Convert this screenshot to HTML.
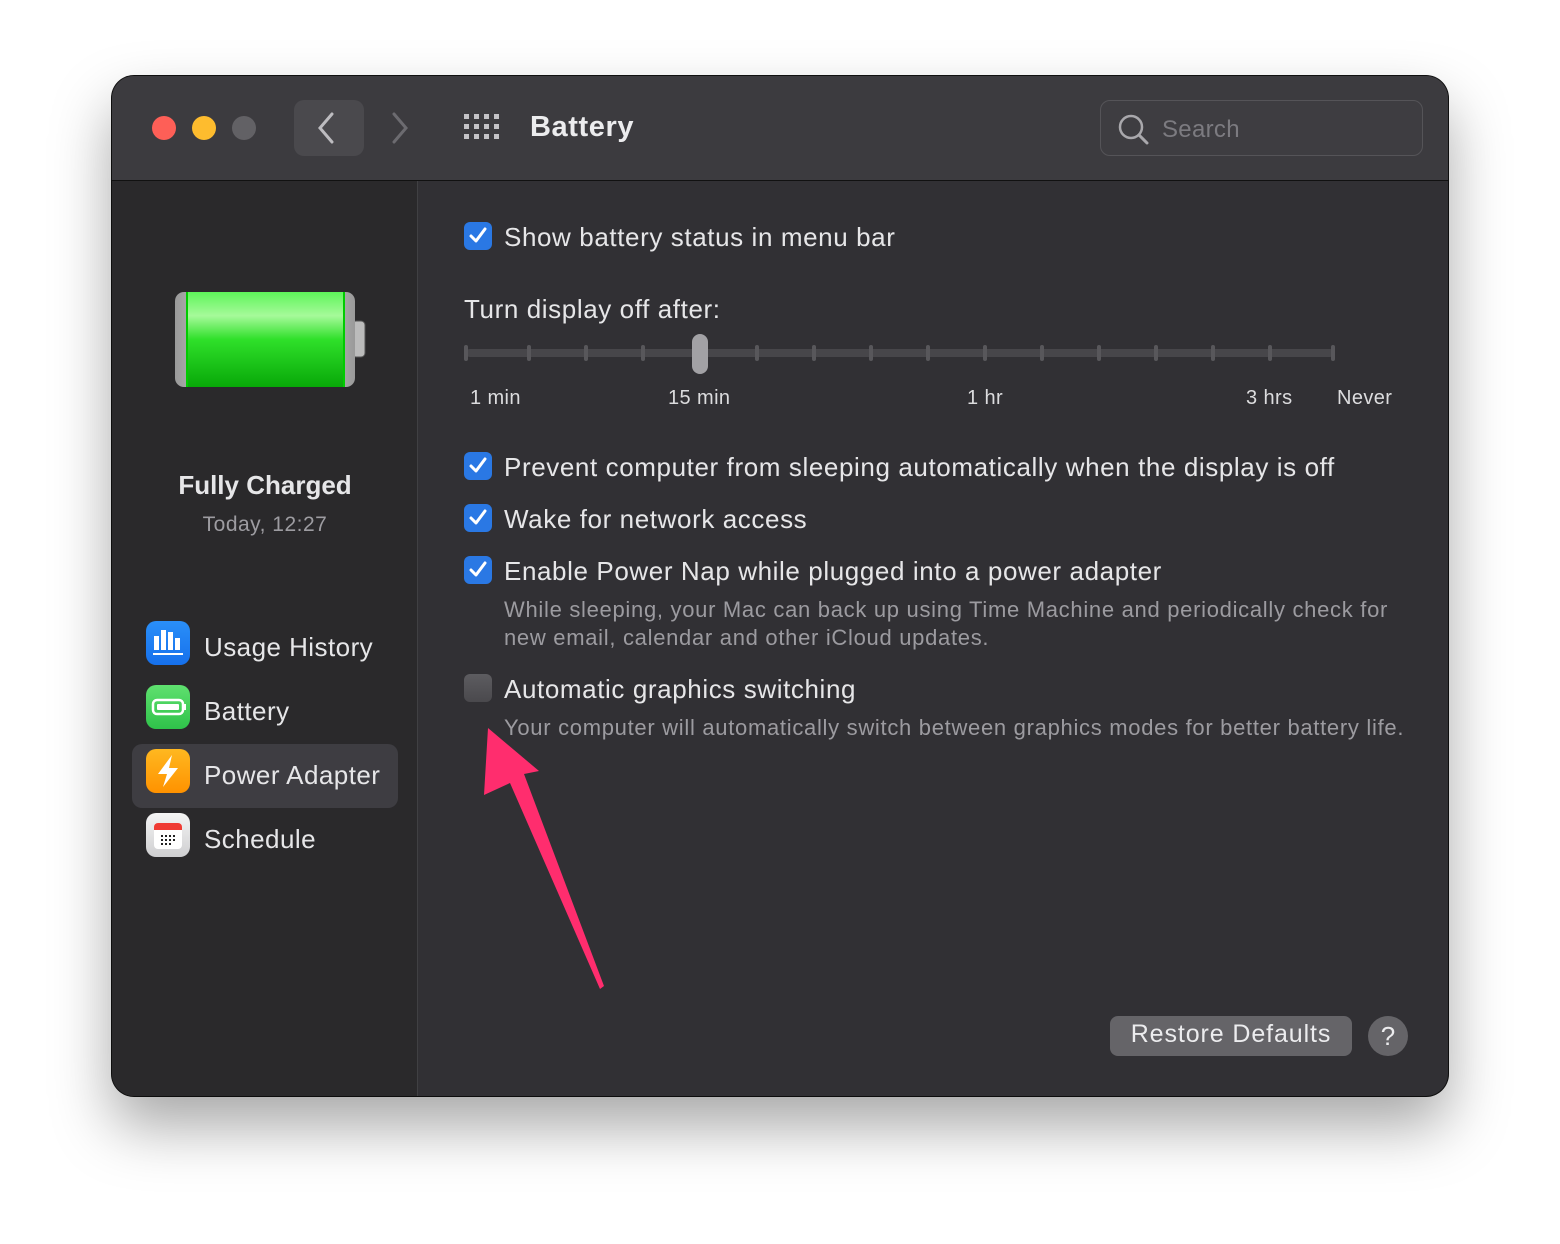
<!DOCTYPE html>
<html><head><meta charset="utf-8"><style>
*{margin:0;padding:0;box-sizing:border-box}
body{width:1560px;height:1244px;background:#fff;position:relative;overflow:hidden;font-family:"Liberation Sans",sans-serif;color:#e4e4e6}
.win{position:absolute;left:112px;top:76px;width:1336px;height:1020px;border-radius:22px;background:#313034;overflow:hidden;box-shadow:0 30px 60px rgba(0,0,0,.35),0 0 0 1px #111;}
.title{position:absolute;left:0;top:0;width:1336px;height:105px;background:#3c3b3f;border-bottom:1px solid #111}
.side{position:absolute;left:0;top:105px;width:306px;height:915px;background:#2a292b;border-right:1px solid #404043}
.a{position:absolute;white-space:nowrap}
.dot{position:absolute;width:24px;height:24px;border-radius:50%;top:40px}
.cb{position:absolute;left:352px;width:28px;height:28px;border-radius:6px;background:#2a78e4}
.cb svg{position:absolute;left:4px;top:4px}
.t{font-size:26px;letter-spacing:0.6px;color:#e6e6e8}
.s{font-size:22px;letter-spacing:0.7px;color:#9c9ba0}
.l{font-size:20px;letter-spacing:0.4px;color:#dcdcde;top:311px}
.tick{position:absolute;top:269px;width:4px;height:16px;border-radius:2px;background:#58575b}
.ic{position:absolute;left:34px;width:44px;height:44px;border-radius:10px}
</style></head><body>
<div class="win">
 <div class="title">
  <div class="dot" style="left:40px;background:#fe5f57"></div>
  <div class="dot" style="left:80px;background:#febc2e"></div>
  <div class="dot" style="left:120px;background:#626165"></div>
  <div class="a" style="left:182px;top:24px;width:70px;height:56px;border-radius:10px;background:#4a494d"></div>
  <svg class="a" style="left:200px;top:34px" width="30" height="36"><path d="M20 4 L8 18 L20 32" stroke="#bdbcc0" stroke-width="3" fill="none" stroke-linecap="round"/></svg>
  <svg class="a" style="left:274px;top:34px" width="30" height="36"><path d="M8 4 L20 18 L8 32" stroke="#6c6b70" stroke-width="3" fill="none" stroke-linecap="round"/></svg>
  <svg class="a" style="left:352px;top:38px" width="38" height="28" fill="#c4c3c7">
   <rect x="0" y="0" width="5" height="5"/><rect x="10" y="0" width="5" height="5"/><rect x="20" y="0" width="5" height="5"/><rect x="30" y="0" width="5" height="5"/>
   <rect x="0" y="10" width="5" height="5"/><rect x="10" y="10" width="5" height="5"/><rect x="20" y="10" width="5" height="5"/><rect x="30" y="10" width="5" height="5"/>
   <rect x="0" y="20" width="5" height="5"/><rect x="10" y="20" width="5" height="5"/><rect x="20" y="20" width="5" height="5"/><rect x="30" y="20" width="5" height="5"/>
  </svg>
  <div class="a" style="left:418px;top:35px;font-size:29px;letter-spacing:0.6px;font-weight:bold;color:#ececee">Battery</div>
  <div class="a" style="left:988px;top:24px;width:323px;height:56px;border-radius:10px;border:1px solid #555458;background:#3e3d41"></div>
  <svg class="a" style="left:1004px;top:36px" width="36" height="36"><circle cx="15" cy="15" r="11" stroke="#a9a8ac" stroke-width="2.5" fill="none"/><path d="M23 23 L31 31" stroke="#a9a8ac" stroke-width="3" stroke-linecap="round"/></svg>
  <div class="a" style="left:1050px;top:40px;font-size:24px;letter-spacing:0.3px;color:#7c7b80">Search</div>
 </div>
 <div class="side">
  <svg class="a" style="left:62px;top:110px" width="192" height="100">
   <defs><linearGradient id="g" x1="0" y1="0" x2="0" y2="1"><stop offset="0" stop-color="#5ef55a"/><stop offset=".25" stop-color="#a6fa9a"/><stop offset=".5" stop-color="#2fe02a"/><stop offset="1" stop-color="#08a808"/></linearGradient>
   <linearGradient id="m" x1="0" y1="0" x2="1" y2="0"><stop offset="0" stop-color="#999"/><stop offset=".5" stop-color="#fff"/><stop offset="1" stop-color="#999"/></linearGradient></defs>
   <rect x="178" y="30" width="13" height="36" rx="4" fill="#bbb" stroke="#555"/>
   <rect x="1" y="1" width="180" height="95" rx="9" fill="url(#m)"/>
   <rect x="12" y="1" width="159" height="95" fill="url(#g)"/>
   <rect x="12" y="1" width="2" height="95" fill="#0c0"/><rect x="169" y="1" width="2" height="95" fill="#0c0"/>
  </svg>
  <div class="a" style="left:0;width:306px;text-align:center;top:289px;font-size:26px;font-weight:bold;color:#e6e6e8">Fully Charged</div>
  <div class="a" style="left:0;width:306px;text-align:center;top:332px;font-size:21px;letter-spacing:0.5px;color:#9d9ca1">Today, 12:27</div>
  <div class="ic" style="top:440px;background:linear-gradient(#2a8ff8,#1670ec)"><svg width="44" height="44" fill="#fff"><rect x="8" y="15" width="5" height="14"/><rect x="15" y="9" width="5" height="20"/><rect x="22" y="11" width="5" height="18"/><rect x="29" y="17" width="5" height="12"/><rect x="7" y="32" width="30" height="2"/></svg></div>
  <div class="a t" style="left:92px;top:451px;letter-spacing:0.45px">Usage History</div>
  <div class="ic" style="top:504px;background:linear-gradient(#5fe06f,#2fc24a)"><svg width="44" height="44"><rect x="7" y="15" width="30" height="14" rx="4" stroke="#fff" stroke-width="2.5" fill="none"/><rect x="11" y="19" width="22" height="6" rx="1" fill="#fff"/><rect x="38" y="19" width="2" height="6" fill="#fff"/></svg></div>
  <div class="a t" style="left:92px;top:515px;letter-spacing:0.45px">Battery</div>
  <div class="a" style="left:20px;top:563px;width:266px;height:64px;border-radius:10px;background:#3e3d42"></div>
  <div class="ic" style="top:568px;background:linear-gradient(#ffb820,#ff9200)"><svg width="44" height="44"><path d="M26 6 L12 25 L21 25 L17 38 L32 19 L23 19 Z" fill="#fff"/></svg></div>
  <div class="a t" style="left:92px;top:579px;letter-spacing:0.45px">Power Adapter</div>
  <div class="ic" style="top:632px;background:linear-gradient(#f4f4f4,#cfcfd1)"><svg width="44" height="44"><rect x="8" y="10" width="28" height="26" rx="4" fill="#fff"/><path d="M8 14 a4 4 0 0 1 4-4 h20 a4 4 0 0 1 4 4 v3 h-28z" fill="#ef3b33"/><g fill="#222"><rect x="15" y="22" width="2" height="2"/><rect x="19" y="22" width="2" height="2"/><rect x="23" y="22" width="2" height="2"/><rect x="27" y="22" width="2" height="2"/><rect x="15" y="26" width="2" height="2"/><rect x="19" y="26" width="2" height="2"/><rect x="23" y="26" width="2" height="2"/><rect x="27" y="26" width="2" height="2"/><rect x="15" y="30" width="2" height="2"/><rect x="19" y="30" width="2" height="2"/><rect x="23" y="30" width="2" height="2"/></g></svg></div>
  <div class="a t" style="left:92px;top:643px;letter-spacing:0.45px">Schedule</div>
 </div>

 <div class="cb" style="top:146px"><svg width="20" height="20"><path d="M3 10 L8 15 L17 3" stroke="#fff" stroke-width="3" fill="none" stroke-linecap="round" stroke-linejoin="round"/></svg></div>
 <div class="a t" style="left:392px;top:146px">Show battery status in menu bar</div>
 <div class="a t" style="left:352px;top:218px">Turn display off after:</div>
 <div class="a" style="left:354px;top:273px;width:868px;height:8px;border-radius:4px;background:#47464a"></div>
 <div class="tick" style="left:352px"></div><div class="tick" style="left:415px"></div><div class="tick" style="left:472px"></div><div class="tick" style="left:529px"></div>
 <div class="tick" style="left:643px"></div><div class="tick" style="left:700px"></div><div class="tick" style="left:757px"></div><div class="tick" style="left:814px"></div><div class="tick" style="left:871px"></div><div class="tick" style="left:928px"></div><div class="tick" style="left:985px"></div><div class="tick" style="left:1042px"></div><div class="tick" style="left:1099px"></div><div class="tick" style="left:1156px"></div><div class="tick" style="left:1219px"></div>
 <div class="a" style="left:580px;top:258px;width:16px;height:40px;border-radius:8px;background:#a2a1a5"></div>
 <div class="a l" style="left:358px">1 min</div>
 <div class="a l" style="left:556px">15 min</div>
 <div class="a l" style="left:855px">1 hr</div>
 <div class="a l" style="left:1134px">3 hrs</div>
 <div class="a l" style="left:1225px">Never</div>

 <div class="cb" style="top:376px"><svg width="20" height="20"><path d="M3 10 L8 15 L17 3" stroke="#fff" stroke-width="3" fill="none" stroke-linecap="round" stroke-linejoin="round"/></svg></div>
 <div class="a t" style="left:392px;top:376px">Prevent computer from sleeping automatically when the display is off</div>
 <div class="cb" style="top:428px"><svg width="20" height="20"><path d="M3 10 L8 15 L17 3" stroke="#fff" stroke-width="3" fill="none" stroke-linecap="round" stroke-linejoin="round"/></svg></div>
 <div class="a t" style="left:392px;top:428px">Wake for network access</div>
 <div class="cb" style="top:480px"><svg width="20" height="20"><path d="M3 10 L8 15 L17 3" stroke="#fff" stroke-width="3" fill="none" stroke-linecap="round" stroke-linejoin="round"/></svg></div>
 <div class="a t" style="left:392px;top:480px">Enable Power Nap while plugged into a power adapter</div>
 <div class="a s" style="left:392px;top:520px;line-height:28px">While sleeping, your Mac can back up using Time Machine and periodically check for<br>new email, calendar and other iCloud updates.</div>
 <div class="cb" style="top:598px;background:linear-gradient(#5d5c60,#4a494d)"></div>
 <div class="a t" style="left:392px;top:598px">Automatic graphics switching</div>
 <div class="a s" style="left:392px;top:639px">Your computer will automatically switch between graphics modes for better battery life.</div>

 <div class="a" style="left:998px;top:940px;width:242px;height:40px;border-radius:8px;background:#656468"></div>
 <div class="a" style="left:998px;top:944px;width:242px;text-align:center;font-size:25px;letter-spacing:0.9px;color:#ececee">Restore Defaults</div>
 <div class="a" style="left:1256px;top:940px;width:40px;height:40px;border-radius:50%;background:#656468;text-align:center;font-size:26px;line-height:40px;color:#ececee">?</div>
</div>
<svg class="a" style="left:0;top:0" width="1560" height="1244"><polygon points="488,728 539,771 524,774 604,986 600,989 510,783 484,795" fill="#ff2d6e"/></svg>
</body></html>
